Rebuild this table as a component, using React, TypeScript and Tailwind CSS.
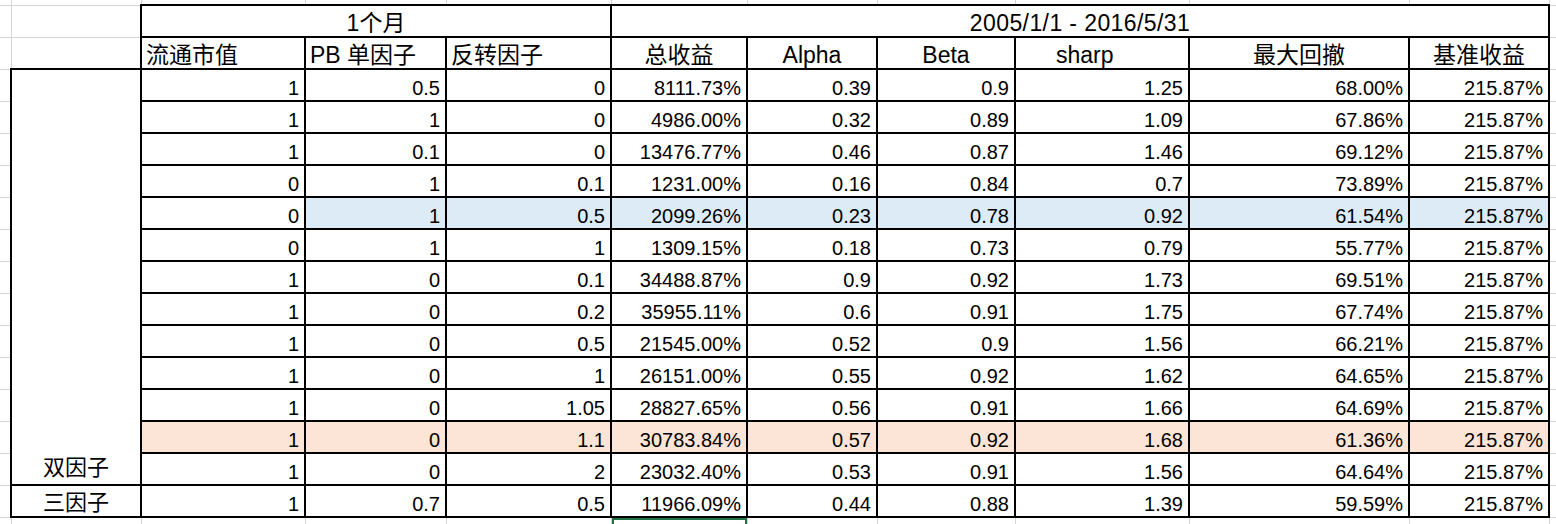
const rows: { v: string[]; hl?: "blue" | "pink" }[] = [
  { v: ["1", "0.5", "0", "8111.73%", "0.39", "0.9", "1.25", "68.00%", "215.87%"] },
  { v: ["1", "1", "0", "4986.00%", "0.32", "0.89", "1.09", "67.86%", "215.87%"] },
  { v: ["1", "0.1", "0", "13476.77%", "0.46", "0.87", "1.46", "69.12%", "215.87%"] },
  { v: ["0", "1", "0.1", "1231.00%", "0.16", "0.84", "0.7", "73.89%", "215.87%"] },
  { v: ["0", "1", "0.5", "2099.26%", "0.23", "0.78", "0.92", "61.54%", "215.87%"], hl: "blue" },
  { v: ["0", "1", "1", "1309.15%", "0.18", "0.73", "0.79", "55.77%", "215.87%"] },
  { v: ["1", "0", "0.1", "34488.87%", "0.9", "0.92", "1.73", "69.51%", "215.87%"] },
  { v: ["1", "0", "0.2", "35955.11%", "0.6", "0.91", "1.75", "67.74%", "215.87%"] },
  { v: ["1", "0", "0.5", "21545.00%", "0.52", "0.9", "1.56", "66.21%", "215.87%"] },
  { v: ["1", "0", "1", "26151.00%", "0.55", "0.92", "1.62", "64.65%", "215.87%"] },
  { v: ["1", "0", "1.05", "28827.65%", "0.56", "0.91", "1.66", "64.69%", "215.87%"] },
  { v: ["1", "0", "1.1", "30783.84%", "0.57", "0.92", "1.68", "61.36%", "215.87%"], hl: "pink" },
  { v: ["1", "0", "2", "23032.40%", "0.53", "0.91", "1.56", "64.64%", "215.87%"] },
  { v: ["1", "0.7", "0.5", "11966.09%", "0.44", "0.88", "1.39", "59.59%", "215.87%"] },
]

const grid = "border border-[#d4d4d4]"
const cell = "border-2 border-black"

function bg(hl: string | undefined, i: number) {
  if (hl === "pink") return "bg-[#fce4d6]"
  if (hl === "blue" && i > 0) return "bg-[#ddebf7]"
  return ""
}

export default function App() {
  return (
    <div className="w-[1556px] h-[524px] bg-white overflow-hidden font-['Liberation_Sans','Noto_Sans_CJK_SC',sans-serif] text-black">
      <table className="border-collapse table-fixed w-[1556px]">
        <colgroup>
          <col className="w-[11px]" />
          <col className="w-[130px]" />
          <col className="w-[164px]" />
          <col className="w-[141px]" />
          <col className="w-[165px]" />
          <col className="w-[136px]" />
          <col className="w-[130px]" />
          <col className="w-[138px]" />
          <col className="w-[174px]" />
          <col className="w-[220px]" />
          <col className="w-[140px]" />
          <col className="w-[7px]" />
        </colgroup>
        <tbody>
          {/* strip above the table */}
          <tr className="h-[5px]">
            {Array.from({ length: 12 }).map((_, i) => (
              <td key={i} className={`${grid} border-t-0 p-0 ${i === 0 ? "border-l-0" : ""} ${i === 11 ? "border-r-0" : ""}`} />
            ))}
          </tr>

          {/* header 1 */}
          <tr className="h-[32px] text-[23px] leading-none">
            <td className={`${grid} border-l-0 p-0`} />
            <td className={`${grid} p-0`} />
            <td colSpan={3} className={`${cell} p-0 text-center pt-[4px]`}>1个月</td>
            <td colSpan={6} className={`${cell} p-0 text-center pt-[4px] tracking-[0.4px]`}>2005/1/1 - 2016/5/31</td>
            <td className={`${grid} border-r-0 p-0`} />
          </tr>

          {/* header 2 */}
          <tr className="h-[32px] text-[23px] leading-none">
            <td className={`${grid} border-l-0 p-0`} />
            <td className={`${grid} p-0`} />
            <td className={`${cell} p-0 pl-[4px] pt-[4px] text-left`}>流通市值</td>
            <td className={`${cell} p-0 pl-[4px] pt-[4px] text-left`}>PB 单因子</td>
            <td className={`${cell} p-0 pl-[4px] pt-[4px] text-left`}>反转因子</td>
            <td className={`${cell} p-0 pt-[4px] text-center`}>总收益</td>
            <td className={`${cell} p-0 pt-[4px] text-center`}>Alpha</td>
            <td className={`${cell} p-0 pt-[4px] text-center`}>Beta</td>
            <td className={`${cell} p-0 pt-[4px] text-left pl-[40px]`}>sharp</td>
            <td className={`${cell} p-0 pt-[4px] text-center`}>最大回撤</td>
            <td className={`${cell} p-0 pt-[4px] text-center`}>基准收益</td>
            <td className={`${grid} border-r-0 p-0`} />
          </tr>

          {/* data rows */}
          {rows.map((r, ri) => (
            <tr key={ri} className="h-[32px] text-[20px] leading-none">
              <td className={`${grid} border-l-0 p-0`} />
              {ri === 0 && (
                <td rowSpan={13} className={`${cell} p-0 pb-[5px] align-bottom text-center text-[22px]`}>双因子</td>
              )}
              {ri === 13 && (
                <td className={`${cell} p-0 pt-[4px] text-center text-[22px]`}>三因子</td>
              )}
              {r.v.map((v, i) => (
                <td key={i} className={`${cell} ${bg(r.hl, i)} p-0 pr-[5px] pt-[5px] text-right`}>
                  {v}
                </td>
              ))}
              <td className={`${grid} border-r-0 p-0`} />
            </tr>
          ))}

          {/* strip below the table */}
          <tr className="h-[7px]">
            {Array.from({ length: 12 }).map((_, i) => (
              <td key={i} className={`${grid} border-b-0 p-0 align-top ${i === 0 ? "border-l-0" : ""} ${i === 11 ? "border-r-0" : ""}`}>
                {i === 5 && <div className="h-[6px] border-x-2 border-t-2 border-[#217346]" />}
              </td>
            ))}
          </tr>
        </tbody>
      </table>
    </div>
  )
}
